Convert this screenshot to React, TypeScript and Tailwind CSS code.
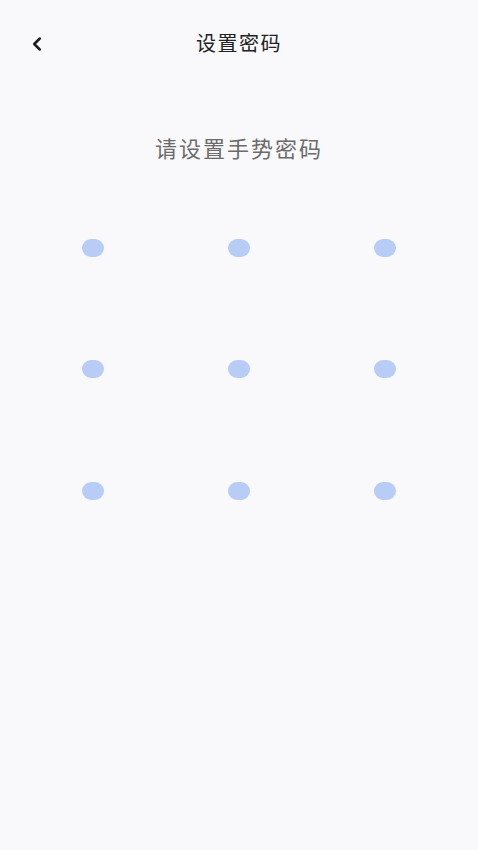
import { ChevronLeft } from 'lucide-react';

const font = { fontFamily: '"Noto Sans CJK SC", "Noto Sans", sans-serif' };

export default function App() {
  const dots = Array.from({ length: 9 }, (_, i) => i);

  return (
    <div className="w-full min-h-[850px] bg-[#f9f9fb] flex flex-col" style={font}>
      {/* Header */}
      <div className="relative h-[88px] flex items-center justify-center">
        <button className="absolute left-[26px] top-[33px] text-[#1f1f1f]">
          <ChevronLeft className="w-[22px] h-[22px]" strokeWidth={2.8} />
        </button>
        <h1 className="text-[20px] tracking-[1.5px] text-[#222222] -mt-[2px]">设置密码</h1>
      </div>

      <p className="mt-[44px] text-center text-[22px] tracking-[2px] text-[#6b6b6b] leading-[30px]">
        请设置手势密码
      </p>

      {/* Pattern grid */}
      <div className="mt-[25px] mx-[20px] grid grid-cols-3">
        {dots.map((i) => (
          <div key={i} className="h-[121.5px] flex items-center justify-center">
            <div className="w-[22px] h-[18px] rounded-full bg-[#b7cdf6]" />
          </div>
        ))}
      </div>
    </div>
  );
}
